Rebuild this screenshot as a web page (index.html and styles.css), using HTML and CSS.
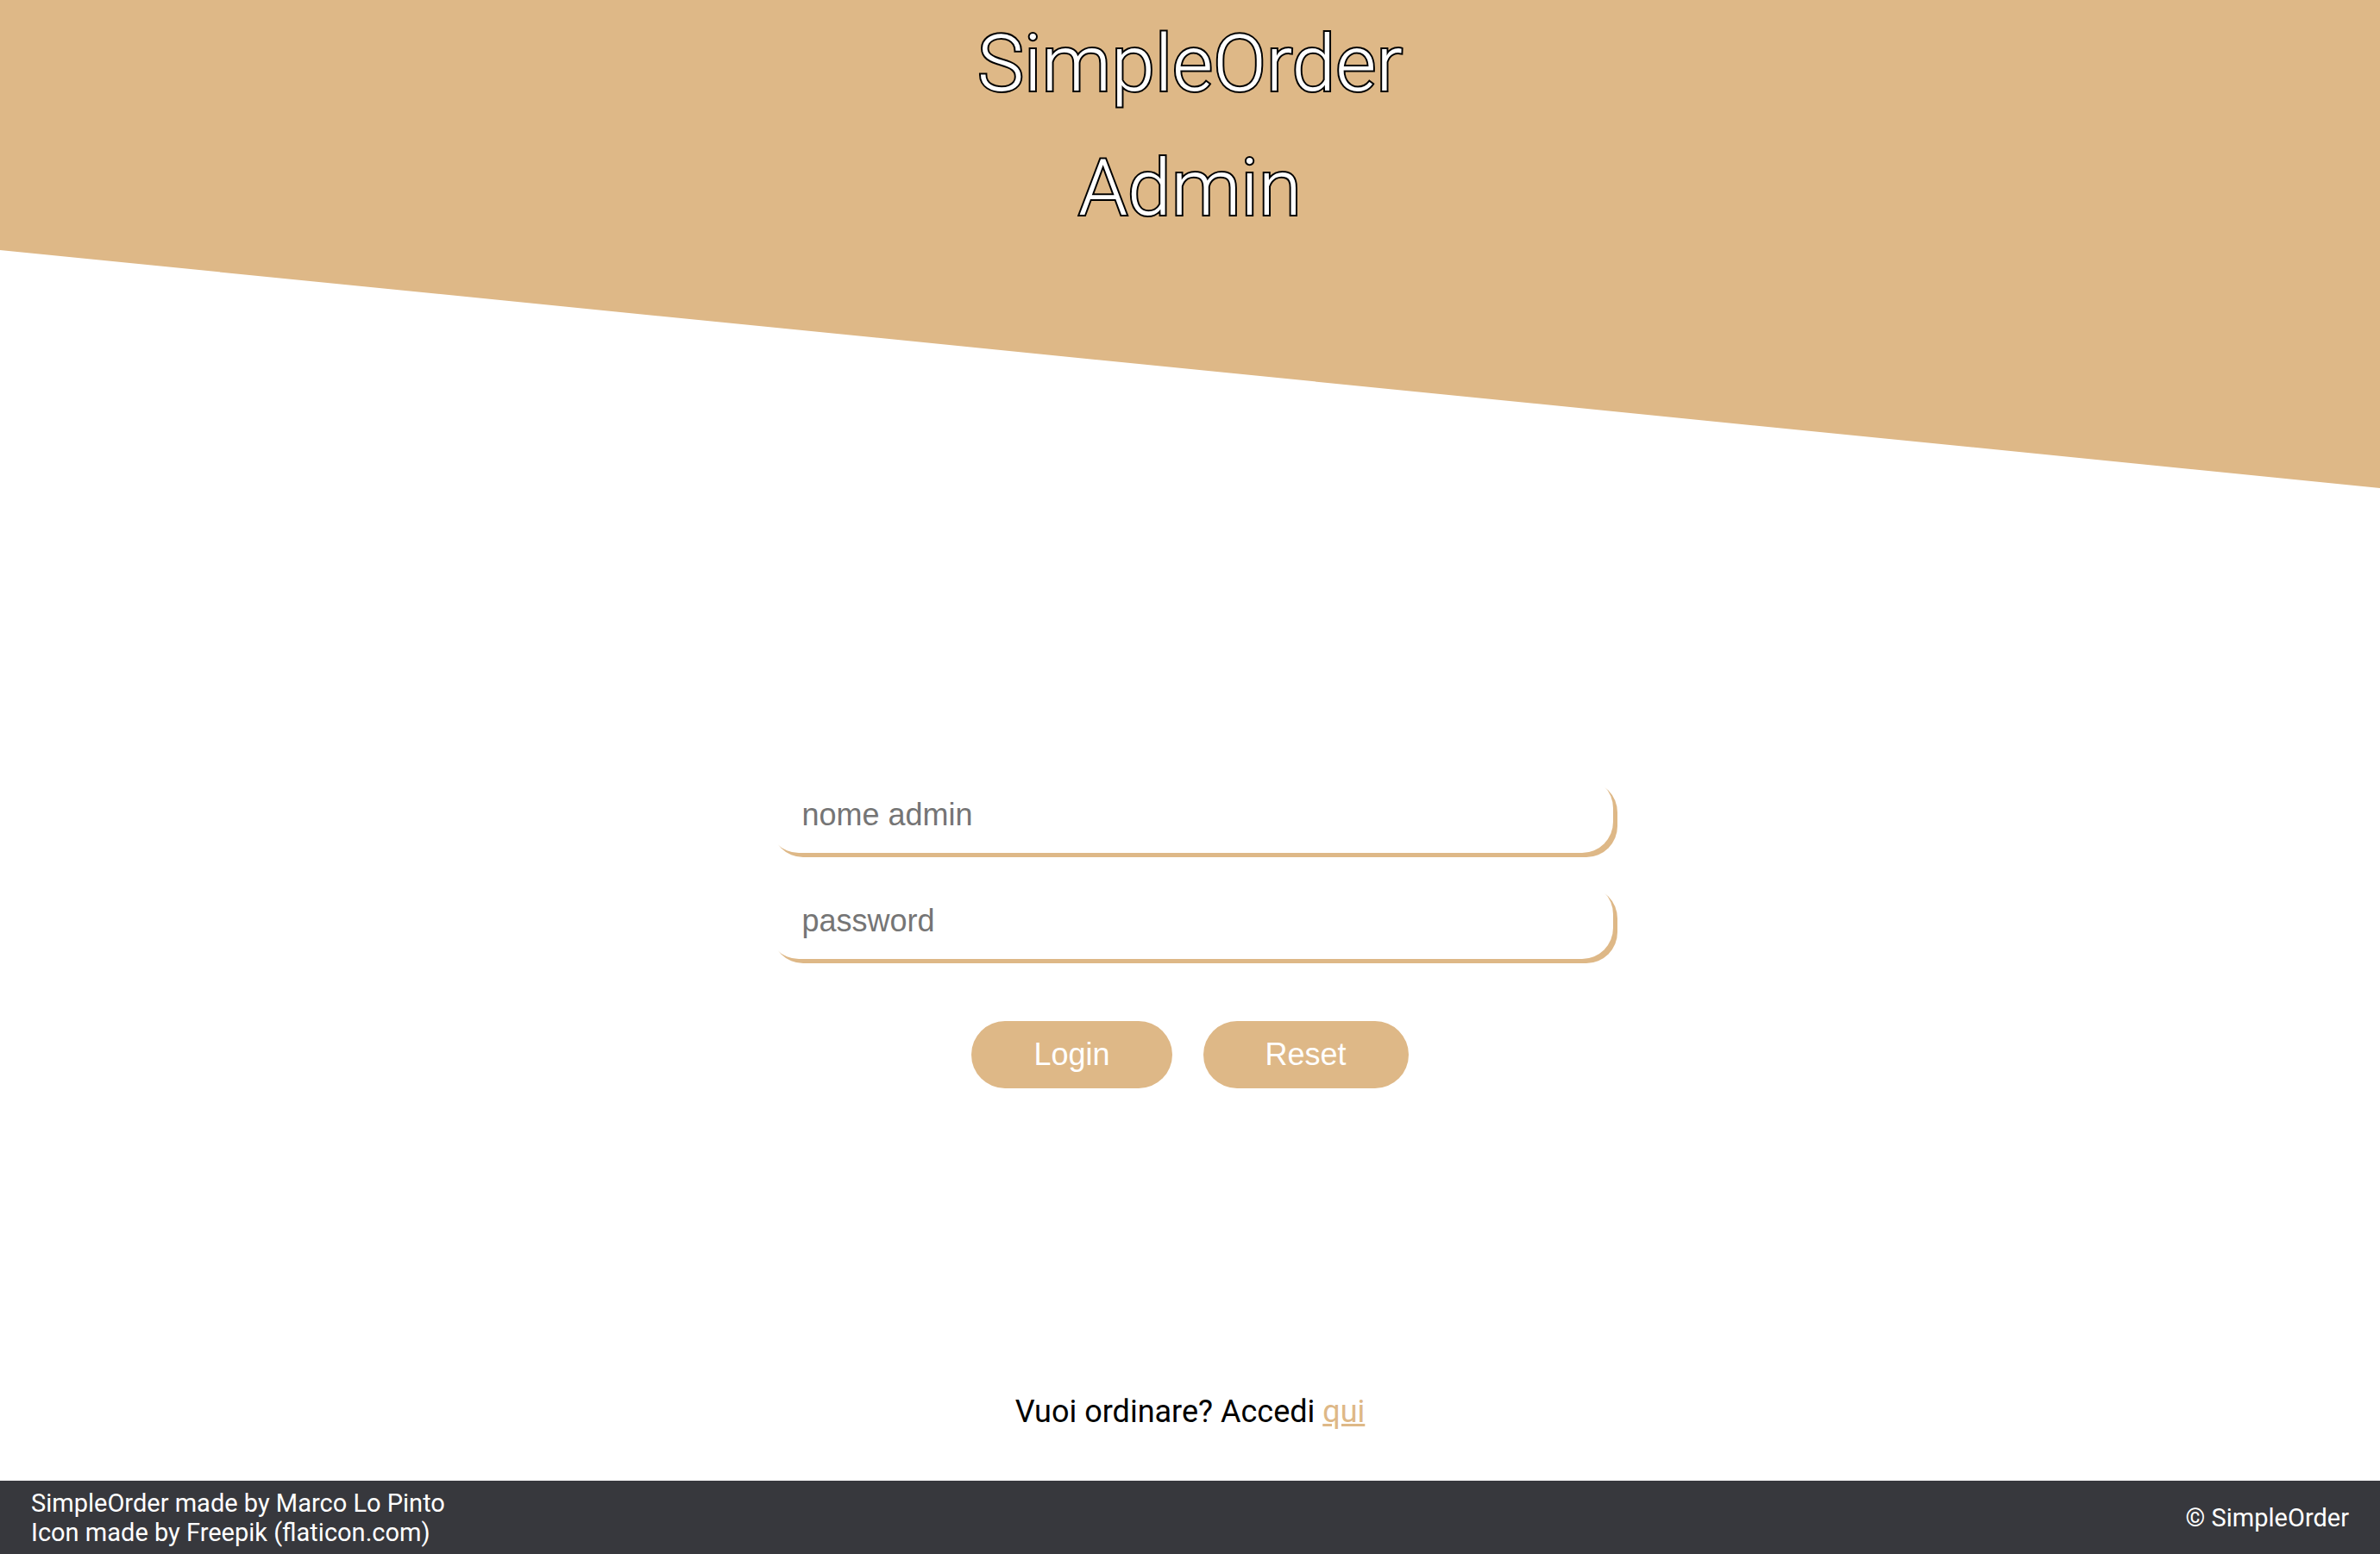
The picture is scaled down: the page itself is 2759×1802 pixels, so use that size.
FILE: index.html
```html
<!DOCTYPE html>
<html lang="it">
<head>
  <meta charset="utf-8">
  <meta name="viewport" content="width=device-width, initial-scale=1">
  <title>SimpleOrder Admin</title>
  <link rel="stylesheet" href="styles.css">
</head>
<body>
  <header class="hero">
    <h1 class="title">SimpleOrder<br>Admin</h1>
  </header>
  <main class="main">
    <form class="login-form">
      <input class="field" type="text" name="admin" placeholder="nome admin" aria-label="nome admin">
      <input class="field" type="password" name="password" placeholder="password" aria-label="password">
      <div class="actions">
        <button class="button" type="submit">Login</button>
        <button class="button" type="reset">Reset</button>
      </div>
    </form>
    <p class="order-link">Vuoi ordinare? Accedi <a href="#">qui</a></p>
  </main>
  <footer class="footer">
    <p>SimpleOrder made by Marco Lo Pinto<br>Icon made by Freepik (flaticon.com)</p>
    <p>© SimpleOrder</p>
  </footer>
</body>
</html>
```
FILE: styles.css
```css
* {
  box-sizing: border-box;
}

body {
  display: flex;
  flex-direction: column;
  min-height: 100vh;
  margin: 0;
  background: #fff;
  color: #000;
  font-family: Roboto, sans-serif;
  font-size: 36px;
}

p {
  margin: 0;
}

/* Slanted banner: the left edge ends 10vw above the right one */
.hero {
  padding: 2px 0 10vw;
  background: burlywood;
  clip-path: polygon(0 0, 100% 0, 100% 100%, 0 calc(100% - 10vw));
}

/* The fill is painted over the stroke, so only the outline stays black */
.title {
  margin: 0;
  color: #fff;
  font-size: 91px;
  font-weight: 300;
  line-height: 144px;
  text-align: center;
  -webkit-text-stroke: 4px #000;
  paint-order: stroke fill;
}

.main {
  display: flex;
  flex: 1;
  flex-direction: column;
  align-items: center;
}

.login-form {
  display: flex;
  flex: 1;
  flex-direction: column;
  align-items: center;
  justify-content: center;
  gap: 35px;
  width: 100%;
}

.field {
  width: 980px;
  max-width: 90%;
  padding: 23px 40px;
  border: 0;
  border-radius: 36px;
  background: #fff;
  box-shadow: 5px 5px 0 burlywood;
  font-family: "Liberation Sans", Arial, sans-serif;
  font-size: 36px;
}

.field::placeholder {
  color: #757575;
}

.actions {
  display: flex;
  gap: 36px;
  padding-top: 37px;
}

.button {
  padding: 18px 72px;
  border: 0;
  border-radius: 40px;
  background: burlywood;
  color: #fff;
  font-family: "Liberation Sans", Arial, sans-serif;
  font-size: 36px;
}

.order-link {
  padding: 19px 0 59px;
  line-height: 42px;
}

.order-link a {
  color: burlywood;
}

.footer {
  display: flex;
  align-items: center;
  justify-content: space-between;
  padding: 9px 36px 8px;
  background: #37383d;
  color: #fff;
  font-size: 29px;
  line-height: 34px;
}
```
